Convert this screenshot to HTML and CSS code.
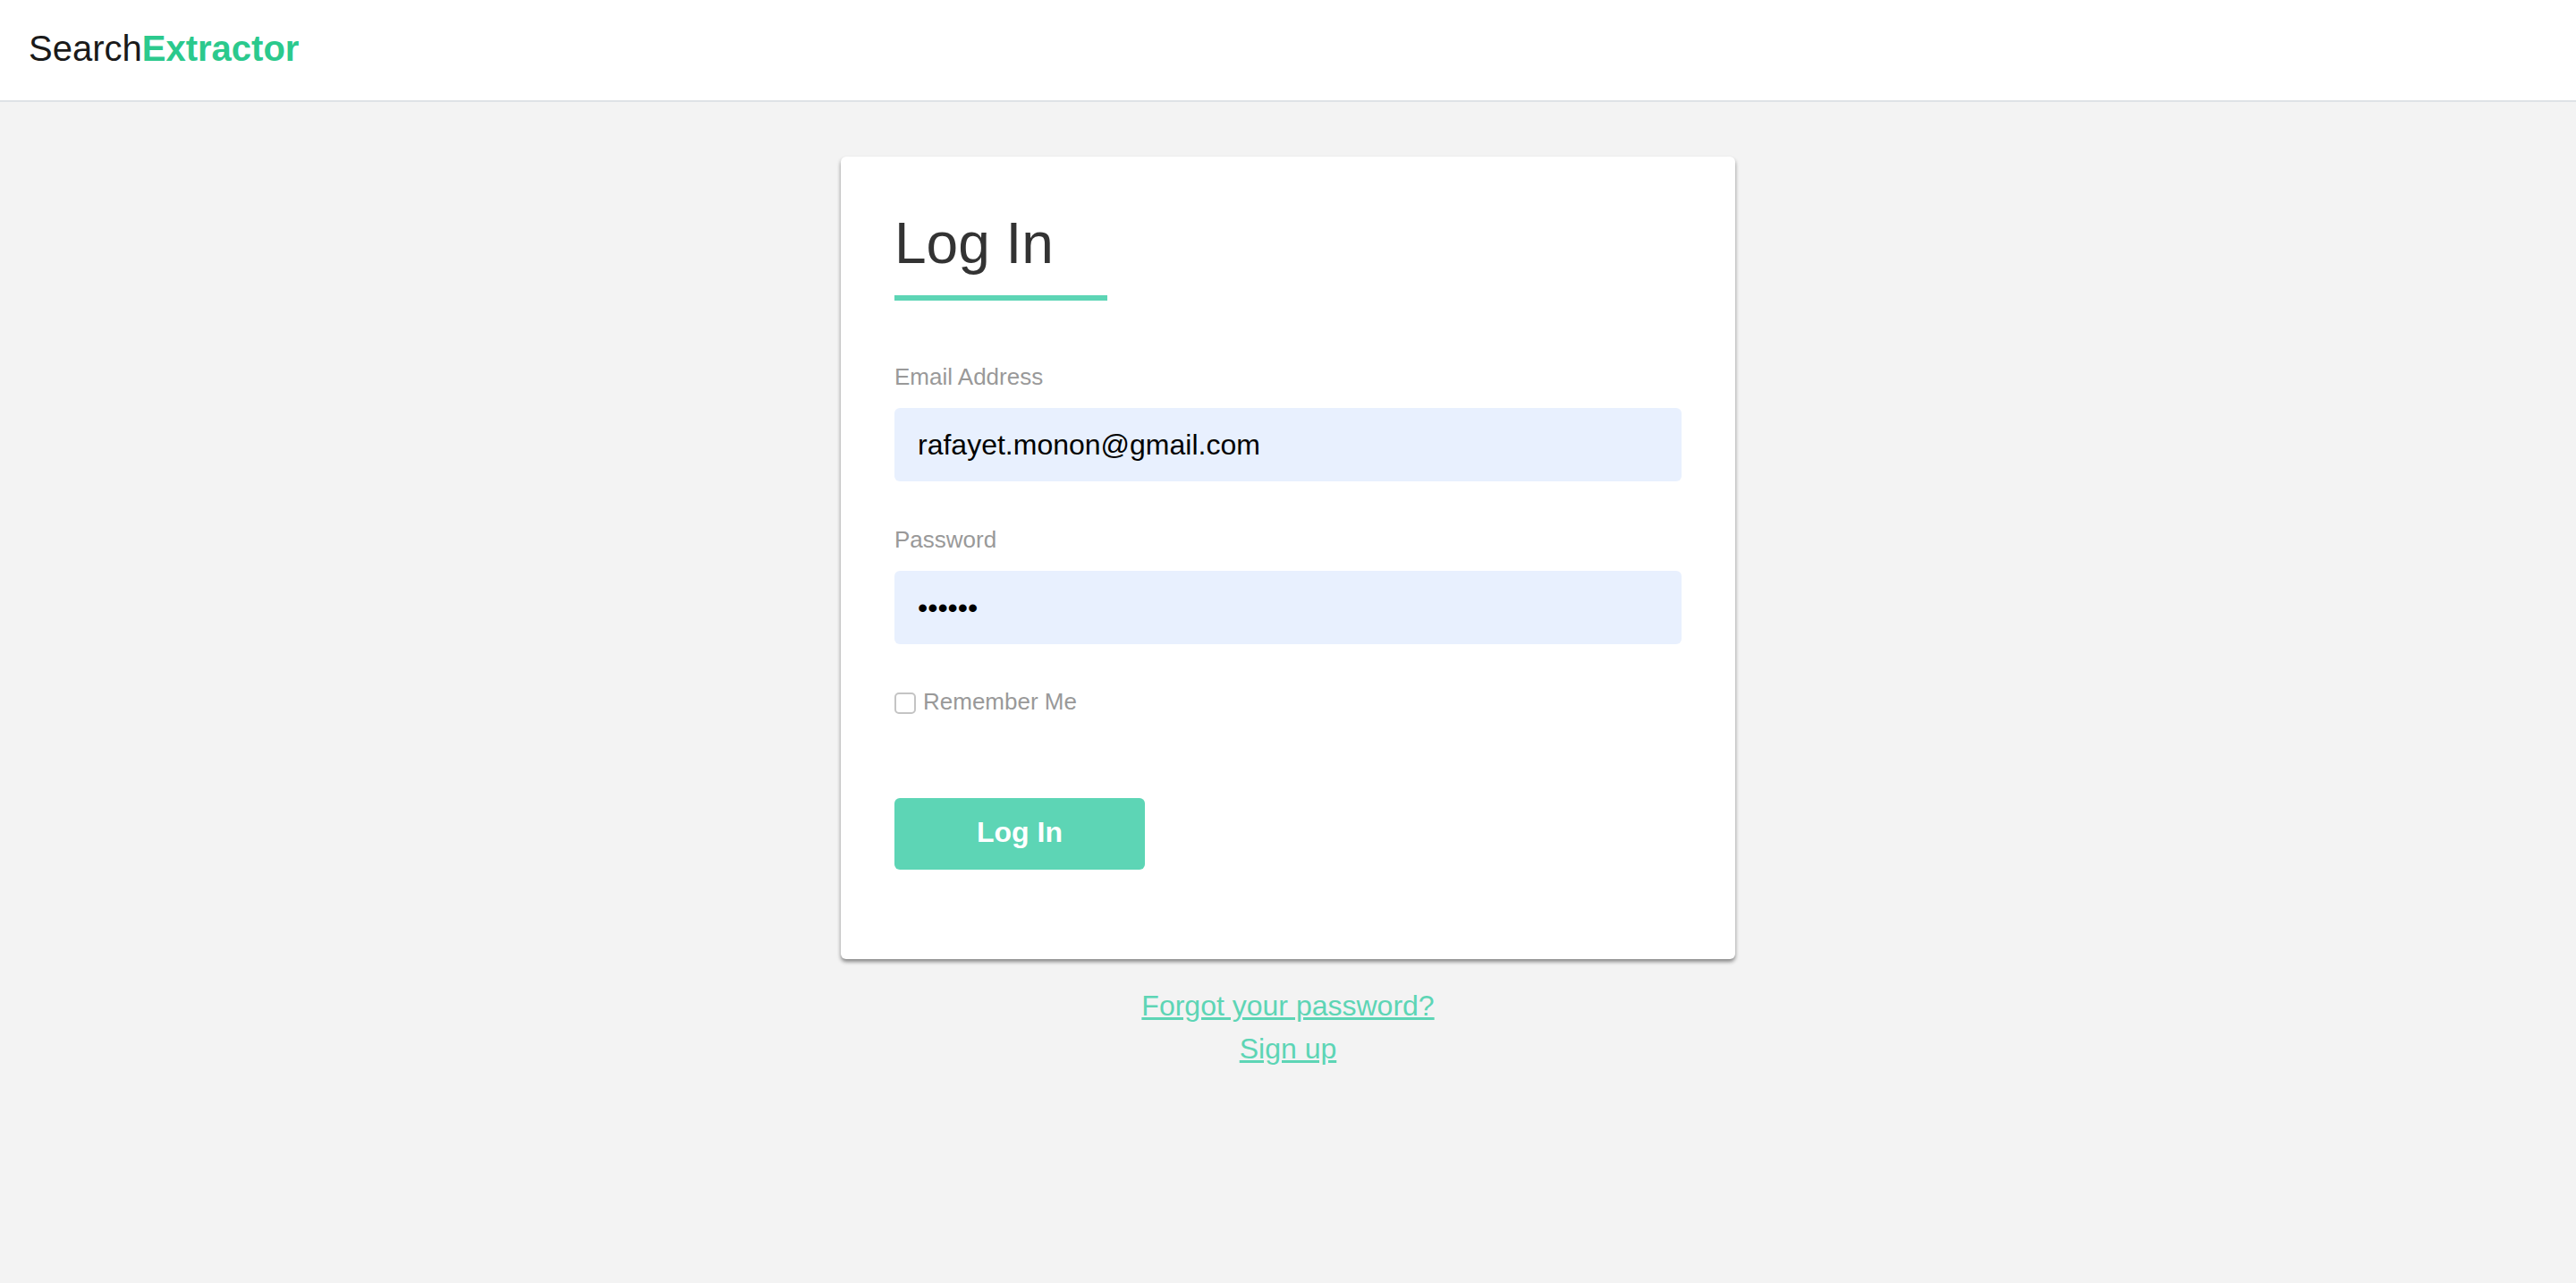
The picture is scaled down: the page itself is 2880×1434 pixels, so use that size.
FILE: index.html
```html
<!DOCTYPE html>
<html>
<head>
    <title>SearchExtractor - Log In</title>
    <link rel="stylesheet" href="styles.css">
</head>
<body>
    <nav class="navbar">
        <a class="brand" href="#">Search<b>Extractor</b></a>
    </nav>
    <main class="page">
        <div class="card">
            <h1 class="card-title">Log In</h1>
            <form class="login-form">
                <label class="field-label" for="email">Email Address</label>
                <input class="field-input" type="email" id="email" value="rafayet.monon@gmail.com">
                <label class="field-label" for="password">Password</label>
                <input class="field-input" type="password" id="password" value="secret">
                <label class="remember">
                    <input class="remember-box" type="checkbox">
                    <span class="remember-text">Remember Me</span>
                </label>
                <button class="submit-btn" type="button">Log In</button>
            </form>
        </div>
        <div class="links">
            <a href="#">Forgot your password?</a>
            <a href="#">Sign up</a>
        </div>
    </main>
</body>
</html>
```

FILE: styles.css
```css
* {
    box-sizing: border-box;
}
body {
    margin: 0;
    min-height: 100vh;
    font-family: "Liberation Sans", Arial, sans-serif;
    background-color: #f3f3f3;
}
.navbar {
    display: flex;
    align-items: center;
    height: 114px;
    padding-left: 32px;
    padding-bottom: 4px;
    background: white;
    border-bottom: 2px solid #dee2e6;
}
.brand {
    font-size: 40px;
    color: #1a1a1a;
    text-decoration: none;
}
.brand b {
    color: #2bc98d;
}
.page {
    display: flex;
    flex-direction: column;
    align-items: center;
    padding-top: 61px;
}
.card {
    width: 1000px;
    padding: 59px 60px 100px;
    background: white;
    border-radius: 6px;
    box-shadow: 0 3px 4px rgba(0, 0, 0, 0.45);
}
.card-title {
    width: 238px;
    margin: 0 0 68px;
    padding-bottom: 20px;
    font-size: 64px;
    font-weight: normal;
    line-height: 76px;
    color: #333;
    border-bottom: 6px solid #5dd5b5;
}
.login-form {
    display: flex;
    flex-direction: column;
}
.field-label {
    margin-top: 1px;
    margin-bottom: 19px;
    font-size: 26px;
    line-height: 32px;
    color: #999;
}
.field-input {
    height: 82px;
    margin-bottom: 47px;
    padding: 0 26px;
    font-family: inherit;
    font-size: 32px;
    color: black;
    background: #e8f0fe;
    border: none;
    border-radius: 6px;
}
.field-input + .field-label {
    margin-top: 2px;
}
.remember {
    display: flex;
    align-items: center;
    gap: 8px;
    height: 32px;
    margin-top: 3px;
    margin-bottom: 90px;
    font-size: 26px;
    color: #999;
}
.remember-box {
    appearance: none;
    width: 24px;
    height: 24px;
    margin: 0;
    background: white;
    border: 2px solid #c4c4c4;
    border-radius: 5px;
}
.remember-text {
    margin-bottom: 3px;
}
.submit-btn {
    width: 280px;
    height: 80px;
    padding: 0 0 3px;
    font-family: inherit;
    font-size: 32px;
    font-weight: bold;
    color: white;
    background-color: #5dd5b5;
    border: none;
    border-radius: 6px;
    cursor: pointer;
}
.links {
    display: flex;
    flex-direction: column;
    align-items: center;
    margin-top: 28px;
    font-size: 32px;
    line-height: 48px;
}
.links a {
    color: #5dd5b5;
}
```
